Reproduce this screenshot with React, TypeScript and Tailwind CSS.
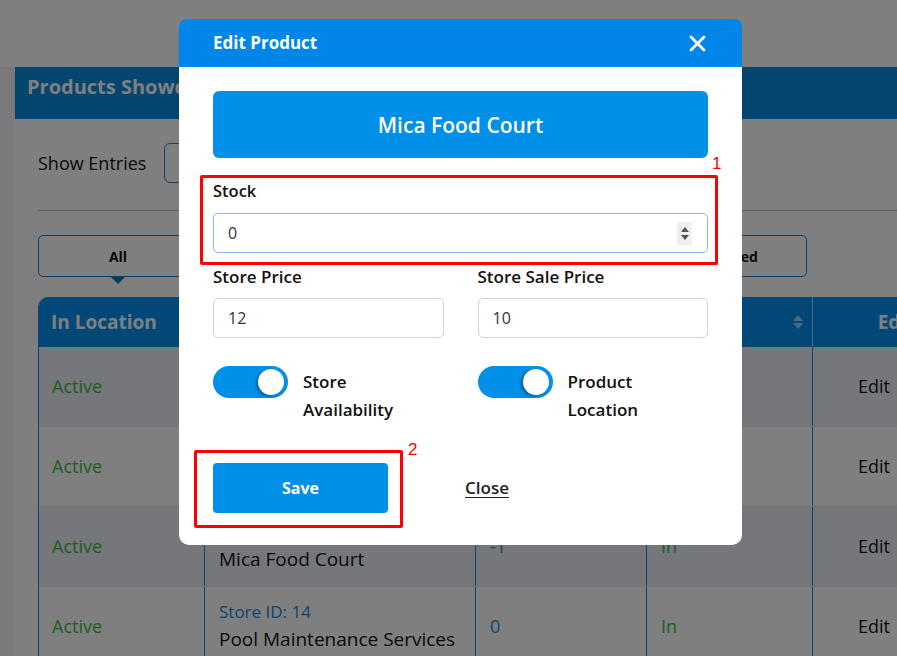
import React from 'react';

type Row = {
  loc: string;
  storeId: string;
  name: string;
  stock: string;
  status: string;
  striped: boolean;
};

const rows: Row[] = [
  { loc: 'Active', storeId: '11', name: 'Aqua Spa Center', stock: '4', status: 'In', striped: true },
  { loc: 'Active', storeId: '12', name: 'City Car Wash', stock: '2', status: 'In', striped: false },
  { loc: 'Active', storeId: '13', name: 'Mica Food Court', stock: '-1', status: 'In', striped: true },
  { loc: 'Active', storeId: '14', name: 'Pool Maintenance Services', stock: '0', status: 'In', striped: false },
];

const tabs = ['All', 'In Store', 'Out of Store', 'Archived'];

const SortIcon = () => (
  <svg width="12" height="18" viewBox="0 0 12 18" className="opacity-60">
    <path d="M6 2 L11 8 H1 Z" fill="#ffffff" />
    <path d="M6 16 L11 10 H1 Z" fill="#ffffff" />
  </svg>
);

const Toggle = () => (
  <div className="relative h-[32px] w-[75px] shrink-0 rounded-full bg-[#0090e8]">
    <span className="absolute right-[4px] top-[3px] h-[26px] w-[26px] rounded-full bg-white shadow-[-2px_1px_3px_rgba(0,0,0,0.35)]" />
  </div>
);

const EditModal = () => (
  <div className="absolute left-[179px] top-[19px] w-[563px] rounded-[10px] bg-white font-['Open_Sans',sans-serif]">
    <div className="flex h-[48px] items-center justify-between rounded-t-[8px] bg-[#0085e8] pl-[34px] pr-[36px]">
      <h2 className="text-[17px] font-bold text-white">Edit Product</h2>
      <svg width="17" height="17" viewBox="0 0 17 17">
        <path d="M2 2 L15 15 M15 2 L2 15" stroke="#ffffff" strokeWidth="2.8" strokeLinecap="round" />
      </svg>
    </div>

    <div className="px-[34px] pb-[32px] pt-[24px]">
      <div className="flex h-[67px] items-center justify-center rounded-[6px] bg-[#0090e8] pt-[2px] text-[21px] font-semibold text-white">
        Mica Food Court
      </div>

      <label className="mt-[21px] block text-[16.5px] font-semibold leading-[24px] text-[#111]">Stock</label>
      <div className="relative mt-[10px] flex h-[40px] items-center rounded-[5px] border border-[#86b7fe] px-[14px] text-[16px] text-[#333]">
        0
        <div className="absolute right-[15px] top-[8px] flex h-[23px] w-[15px] flex-col items-center justify-center gap-[3px] bg-[#efefef]">
          <svg width="8" height="5" viewBox="0 0 8 5">
            <path d="M4 0 L8 5 H0 Z" fill="#555" />
          </svg>
          <svg width="8" height="5" viewBox="0 0 8 5">
            <path d="M0 0 H8 L4 5 Z" fill="#555" />
          </svg>
        </div>
      </div>

      <div className="mt-[12px] grid grid-cols-2 gap-x-[34px]">
        <div>
          <label className="block text-[17px] font-semibold leading-[24px] text-[#111]">Store Price</label>
          <div className="mt-[9px] flex h-[40px] items-center rounded-[5px] border border-[#ced4da] px-[14px] text-[16px] text-[#333]">12</div>
        </div>
        <div>
          <label className="block text-[17px] font-semibold leading-[24px] text-[#111]">Store Sale Price</label>
          <div className="mt-[9px] flex h-[40px] items-center rounded-[5px] border border-[#ced4da] px-[14px] text-[16px] text-[#333]">10</div>
        </div>
      </div>

      <div className="mt-[28px] grid grid-cols-2 gap-x-[34px]">
        <div className="flex items-start gap-[15px]">
          <Toggle />
          <span className="pt-[2px] text-[17px] font-semibold leading-[28px] text-[#111]">
            Store
            <br />
            Availability
          </span>
        </div>
        <div className="flex items-start gap-[15px]">
          <Toggle />
          <span className="pt-[2px] text-[17px] font-semibold leading-[28px] text-[#111]">
            Product
            <br />
            Location
          </span>
        </div>
      </div>

      <div className="mt-[39px] flex items-center gap-[77px]">
        <button className="h-[50px] w-[175px] rounded-[4px] bg-[#0090e8] text-[16px] font-bold text-white">Save</button>
        <button className="text-[17px] font-semibold text-[#222] underline underline-offset-[3px]">Close</button>
      </div>
    </div>

    {/* annotation marks */}
    <div className="absolute left-[21px] top-[156px] h-[90px] w-[518px] rounded-[2px] border-[3px] border-[#ff0000]" />
    <span className="absolute left-[533px] top-[132px] font-['Liberation_Sans',sans-serif] text-[17px] text-[#ff0000]">1</span>
    <div className="absolute left-[15px] top-[431px] h-[78px] w-[209px] rounded-[2px] border-[3px] border-[#ff0000]" />
    <span className="absolute left-[229px] top-[418px] font-['Liberation_Sans',sans-serif] text-[17px] text-[#ff0000]">2</span>
  </div>
);

export default function App() {
  return (
    <div className="relative h-[656px] w-[897px] overflow-hidden bg-[#f4f4f4] font-['Open_Sans',sans-serif]">
      <div className="h-[67px] bg-white" />

      <div className="ml-[15px] h-full bg-white">
        <div className="h-[52px] bg-[#058bde] px-[12px] pt-[6px]">
          <h1 className="text-[20px] font-bold leading-[28px] text-white">Products Showcase</h1>
        </div>

        <div className="pl-[23px]">
          <div className="flex items-center gap-[18px] pt-[24px]">
            <span className="text-[18px] text-[#111]">Show Entries</span>
            <div className="h-[40px] w-[80px] rounded-[6px] border border-[#1a8ee6]" />
          </div>

          <div className="mt-[27px] border-t border-[#bfbfbf]" />

          <div className="mt-[24px] flex gap-[43px]">
            {tabs.map((t, i) => (
              <div key={t} className="relative flex h-[42px] w-[160px] items-center justify-center rounded-[5px] border border-[#1a7fcf] text-[14px] font-bold text-[#111]">
                {t}
                {i === 0 && (
                  <span className="absolute -bottom-[8px] left-1/2 h-0 w-0 -translate-x-1/2 border-x-[7px] border-t-[7px] border-x-transparent border-t-[#0a72c0]" />
                )}
              </div>
            ))}
          </div>

          <div className="mt-[20px] w-[940px] overflow-hidden rounded-tl-[10px] border-l border-[#1a8ae0]">
            <div className="grid h-[50px] grid-cols-[166px_271px_171px_166px_166px] bg-[#0290f0] text-[19px] font-bold text-white">
              <div className="flex items-center border-r border-white/60 px-[12px]">In Location</div>
              <div className="flex items-center border-r border-white/60 px-[14px]">Store / Product</div>
              <div className="flex items-center border-r border-white/60 px-[14px]">Stock</div>
              <div className="flex items-center justify-between border-r border-white/60 pl-[14px] pr-[8px]">
                Status
                <SortIcon />
              </div>
              <div className="flex items-center justify-center">Edit</div>
            </div>

            {rows.map((r) => (
              <div
                key={r.storeId}
                className={`grid h-[80px] grid-cols-[166px_271px_171px_166px_166px] border-b border-[#e4e6ea] text-[18px] ${r.striped ? 'bg-[#eaeef6]' : 'bg-white'}`}
              >
                <div className="flex items-center border-r border-[#1a8ae0] px-[13px] text-[#38c038]">{r.loc}</div>
                <div className="flex flex-col justify-center border-r border-[#1a8ae0] px-[14px]">
                  <span className="text-[17px] leading-[24px] text-[#2288d8]">Store ID: {r.storeId}</span>
                  <span className="text-[19px] leading-[30px] text-[#111]">{r.name}</span>
                </div>
                <div className="flex items-center border-r border-[#1a8ae0] px-[14px] text-[#2288d8]">{r.stock}</div>
                <div className="flex items-center border-r border-[#1a8ae0] px-[14px] text-[#38c038]">{r.status}</div>
                <div className="flex items-center pl-[45px] text-[#111]">Edit</div>
              </div>
            ))}
          </div>
        </div>
      </div>

      <div className="absolute inset-0 bg-black/50" />
      <EditModal />
    </div>
  );
}
